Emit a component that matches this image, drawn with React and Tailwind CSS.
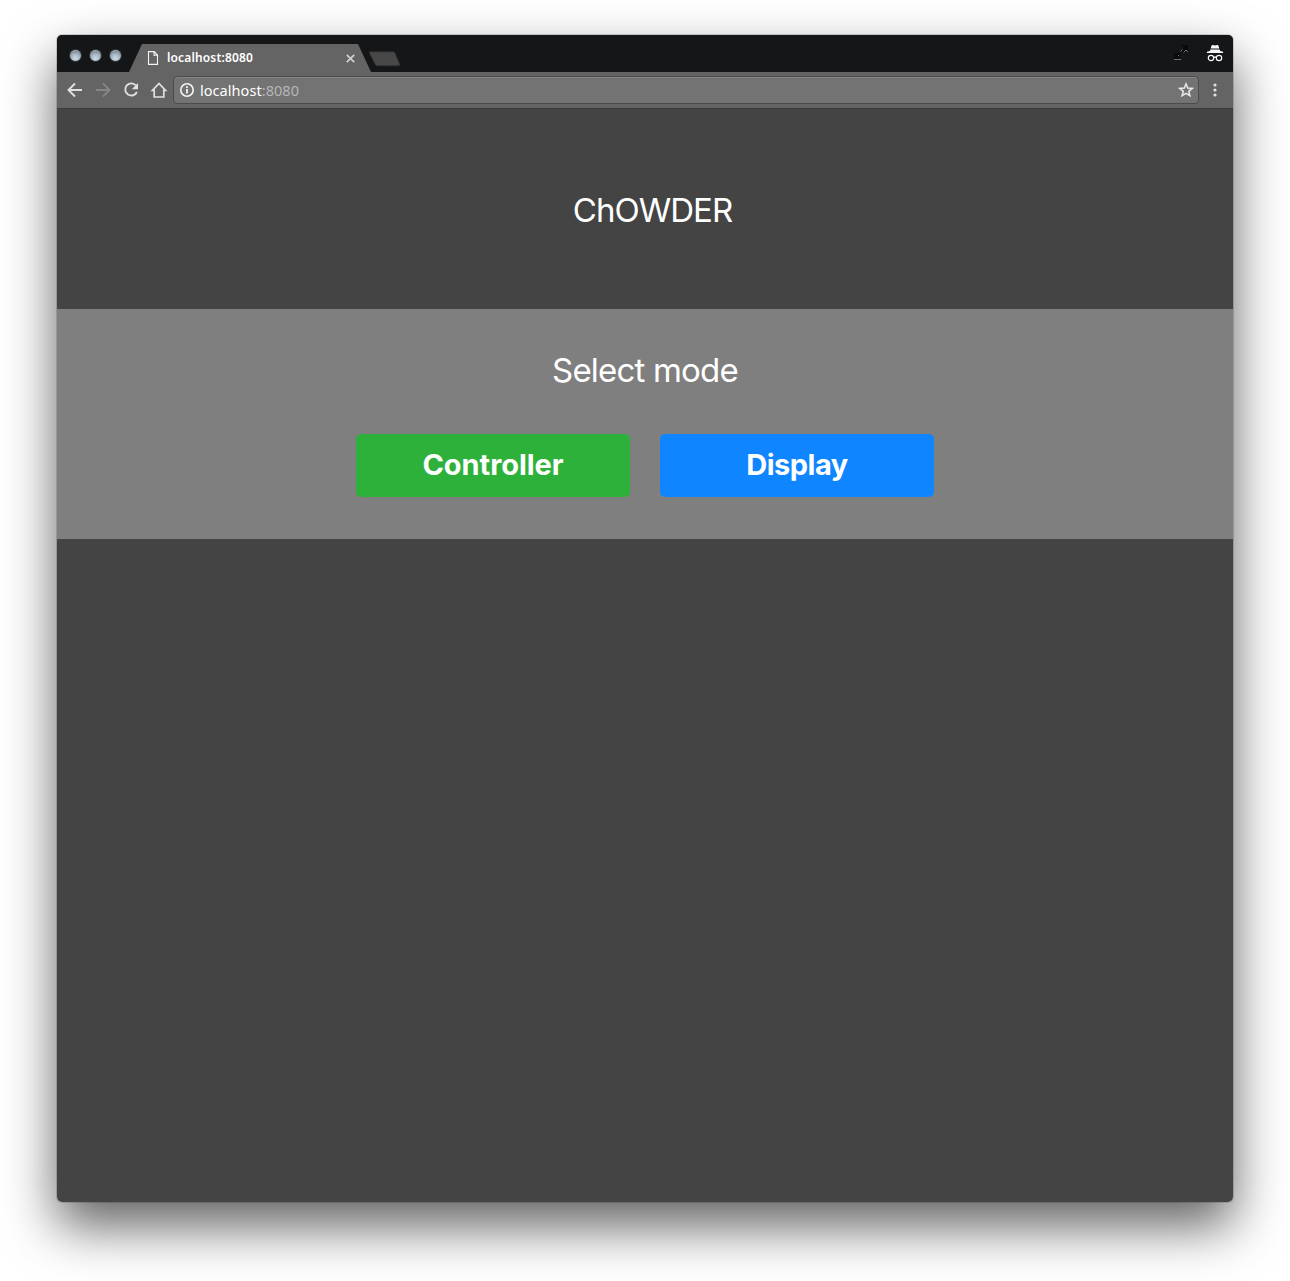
import React from 'react';

function WindowDot() {
  return <span className="h-[13px] w-[13px] rounded-full border border-[#35393d] bg-[radial-gradient(circle_at_50%_75%,#cddbe5_0%,#a9b8c4_40%,#84929e_68%,#d4dce2_100%)]" />;
}

function TabStrip() {
  return (
    <div className="flex h-[37px] items-start bg-[#151618]">
      <div className="ml-[11.5px] mt-[13.5px] flex w-[60.5px] gap-[7px]">
        <WindowDot />
        <WindowDot />
        <WindowDot />
      </div>
      <div className="mt-[9px] flex h-7 w-[242px] items-center bg-[#646464] [clip-path:polygon(0_100%,13px_0,229px_0,100%_100%)]">
        <svg className="ml-[18px]" width="12" height="14" viewBox="0 0 12 14" fill="none" stroke="#f4f4f4" strokeWidth="1.1">
          <path d="M1.500.6h5.800l3.200 3.300v9.500h-9zM7 .6v3.500h3.500" />
        </svg>
        <span className="ml-2 w-[178px] font-['Noto_Sans',sans-serif] text-[12px] font-semibold leading-[18px] tracking-[0.150px] text-white">localhost:8080</span>
        <svg className="ml-[0.5px]" width="9" height="9" viewBox="0 0 9 9" stroke="#d2d2d2" strokeWidth="1.7">
          <path d="M.8.8l7.400 7.400M8.200.8L.8 8.200" />
        </svg>
      </div>
      <svg className="-ml-[3px] mt-4" width="34" height="16" viewBox="0 0 34 16">
        <path d="M2 .8h23.500q1 0 1.400 1L32 14q.3.8-.8.8H9q-1.200 0-1.700-1L1.300 1.600Q1 .8 2 .8z" fill="#484848" stroke="#303030" strokeWidth=".8" />
      </svg>
      <svg className="ml-auto mr-4 mt-[9px]" width="16" height="17" viewBox="0 0 16 17">
        <path d="M8 1h7v7l-2-2-3 3-2-2 3-3zM1 8l2 2 3-2 2 2-3 3 3 3H1z" fill="#090a0b" />
        <path d="M1 15.500h7M5 12l1-1M7.500 7.500l2-2M10.500 8.500l2.500-2.500 2 2" stroke="#707276" fill="none" />
      </svg>
      <svg className="mr-2 mt-[9px]" width="20" height="19" viewBox="0 0 20 19">
        <path d="M6.500 1.700Q6.900.7 8 1l2 .5 2-.5q1.100-.3 1.500.7L14.300 4.500H5.700zM5.400 5.500h9.200l.5 1.500 3 .8V9H1.900V7.800l3-.8z" fill="#f7f7f7" />
        <path d="M9 13.500q1-1 2 0" fill="none" stroke="#f7f7f7" strokeWidth="1.200" />
        <circle cx="6" cy="14" r="2.700" fill="none" stroke="#f7f7f7" strokeWidth="1.200" />
        <circle cx="14" cy="14" r="2.700" fill="none" stroke="#f7f7f7" strokeWidth="1.200" />
      </svg>
    </div>
  );
}

function Toolbar() {
  return (
    <div className="flex h-[37px] items-center border-b border-[#3a3a3a] bg-[#646464]">
      <div className="ml-2 flex w-[108px] gap-2">
        <svg width="20" height="20" viewBox="0 0 20 20" fill="none" stroke="#e0e0e0" strokeWidth="1.900">
          <path d="M17 10H4M10 3.500L3.500 10l6.500 6.500" />
        </svg>
        <svg width="20" height="20" viewBox="0 0 20 20" fill="none" stroke="#858585" strokeWidth="1.900">
          <path d="M3 10h13M10 3.500l6.500 6.500-6.500 6.500" />
        </svg>
        <svg width="20" height="20" viewBox="0 0 20 20">
          <path d="M15 5.500A6.100 6.100 0 1 0 15.900 12" fill="none" stroke="#e0e0e0" strokeWidth="1.900" />
          <path d="M17 3V9.200h-6.200z" fill="#e0e0e0" />
        </svg>
        <svg width="20" height="20" viewBox="0 0 20 20" fill="none" stroke="#e0e0e0" strokeWidth="1.700">
          <path d="M3.500 10.300L10 3.500l6.500 6.800h-1.700V17H5.200v-6.700z" />
        </svg>
      </div>
      <div className="flex h-7 w-[1026px] items-center rounded-[4px] border border-[#4b4b4b] bg-[#737373] shadow-[inset_0_1px_0_#858585]">
        <svg className="ml-[5px]" width="16" height="16" viewBox="0 0 16 16" fill="none" stroke="#f5f5f5">
          <circle cx="8" cy="8" r="6.200" strokeWidth="1.600" />
          <path d="M8 7v4.500M8 4.300V6" strokeWidth="1.800" />
        </svg>
        <span className="ml-[5px] font-['Noto_Sans',sans-serif] text-[14.5px] leading-5 tracking-[0.050px] text-white">localhost<span className="text-[#b6b6b6]">:8080</span></span>
        <svg className="ml-auto mr-1" width="16" height="16" viewBox="0 0 16 16" fill="none" stroke="#e8e8e8" strokeWidth="1.500">
          <path d="M8 1.900l1.700 4.200 4.500.3-3.500 2.900 1.200 4.400L8 11.300l-3.900 2.400 1.200-4.400-3.500-2.900 4.500-.3z" />
        </svg>
      </div>
      <svg className="ml-[13px]" width="6" height="14" viewBox="0 0 6 14" fill="#e0e0e0">
        <circle cx="3" cy="2" r="1.600" />
        <circle cx="3" cy="7" r="1.600" />
        <circle cx="3" cy="12" r="1.600" />
      </svg>
    </div>
  );
}

export default function App() {
  return (
    <div className="h-[1281px] overflow-hidden bg-white pl-[57px] pt-[35px]">
      <div className="h-[1167px] w-[1176px] rounded-[5px] shadow-[0_24px_52px_rgba(0,0,0,0.62),0_0_0_1px_rgba(0,0,0,0.15)]">
        <div className="h-full overflow-hidden rounded-[5px] bg-[#444444]">
          <TabStrip />
          <Toolbar />
          <header className="flex h-[200px] items-center justify-center pl-[15px] pt-[2px] font-['Inter','Liberation_Sans',sans-serif]">
            <h1 className="text-[33px] leading-[48px] tracking-[-1px] text-white">ChOWDER</h1>
          </header>
          <main className="flex h-[230px] flex-col items-center bg-[#7f7f7f] pt-[37px] font-['Inter','Liberation_Sans',sans-serif] text-white">
            <h2 className="text-[33px] leading-[48px] tracking-[-0.8px]">Select mode</h2>
            <div className="mt-[40px] flex gap-[30px]">
              <button className="h-[63px] w-[274px] rounded-[5px] bg-[#2db13b] pb-[2px] text-[29px] font-bold tracking-[-0.050px]">Controller</button>
              <button className="h-[63px] w-[274px] rounded-[5px] bg-[#0f85ff] pb-[2px] text-[29px] font-bold tracking-[-0.5px]">Display</button>
            </div>
          </main>
        </div>
      </div>
    </div>
  );
}
